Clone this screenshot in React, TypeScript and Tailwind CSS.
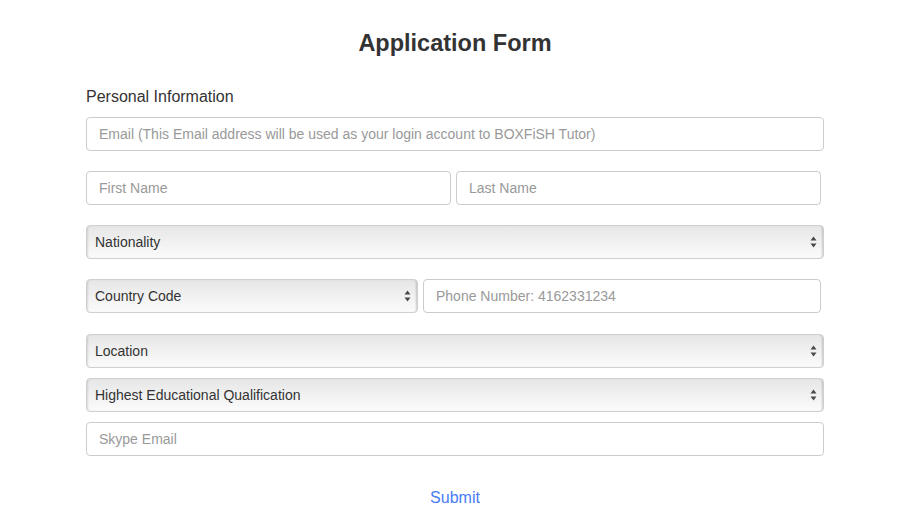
import React from "react";

const font = { fontFamily: '"Liberation Sans", Arial, sans-serif' };

function TextField({ placeholder, className = "" }: { placeholder: string; className?: string }) {
  return (
    <input
      readOnly
      placeholder={placeholder}
      className={
        "h-[34px] rounded-[4px] border border-[#cccccc] bg-white px-3 text-[14px] text-[#555] outline-none placeholder:text-[#999] " +
        className
      }
    />
  );
}

function Arrows() {
  return (
    <svg width="7" height="12" viewBox="0 0 7 12" className="shrink-0">
      <path d="M3.5 0.5 L6.5 4.5 L0.5 4.5 Z" fill="#4a4a4a" />
      <path d="M3.5 11.5 L6.5 7.5 L0.5 7.5 Z" fill="#4a4a4a" />
    </svg>
  );
}

function SelectField({ label, className = "" }: { label: string; className?: string }) {
  return (
    <div
      className={
        "flex h-[34px] items-center justify-between rounded-[4px] border border-[#d0d0d0] bg-gradient-to-b from-[#e6e6e6] via-[#f1f1f1] to-[#fbfbfb] pl-[8px] pr-[6px] text-[14px] text-[#333] shadow-[inset_2px_0_2px_-1px_rgba(0,0,0,0.12),inset_-2px_0_2px_-1px_rgba(0,0,0,0.18)] " +
        className
      }
    >
      <span>{label}</span>
      <Arrows />
    </div>
  );
}

export default function App() {
  return (
    <div className="min-h-[526px] w-full bg-white" style={font}>
      <div className="mx-auto w-[738px] pt-[30px]">
        <h2 className="text-center text-[23.5px] font-bold leading-[26px] text-[#333]">Application Form</h2>
        <div className="mt-[30px] text-[16px] leading-[22px] text-[#333]">Personal Information</div>

        <div className="mt-[9px] flex flex-col">
          <TextField
            placeholder="Email (This Email address will be used as your login account to BOXFiSH Tutor)"
            className="w-full"
          />

          <div className="mt-[20px] flex gap-[5px]">
            <TextField placeholder="First Name" className="w-[365px]" />
            <TextField placeholder="Last Name" className="w-[365px]" />
          </div>

          <SelectField label="Nationality" className="mt-[20px] w-full" />

          <div className="mt-[20px] flex gap-[5px]">
            <SelectField label="Country Code" className="w-[332px]" />
            <TextField placeholder="Phone Number: 4162331234" className="w-[398px]" />
          </div>

          <SelectField label="Location" className="mt-[21px] w-full" />
          <SelectField label="Highest Educational Qualification" className="mt-[10px] w-full" />
          <TextField placeholder="Skype Email" className="mt-[10px] w-full" />
        </div>

        <div className="mt-[31px] text-center text-[16px] leading-[22px] text-[#4a7cf7]">Submit</div>
      </div>
    </div>
  );
}
